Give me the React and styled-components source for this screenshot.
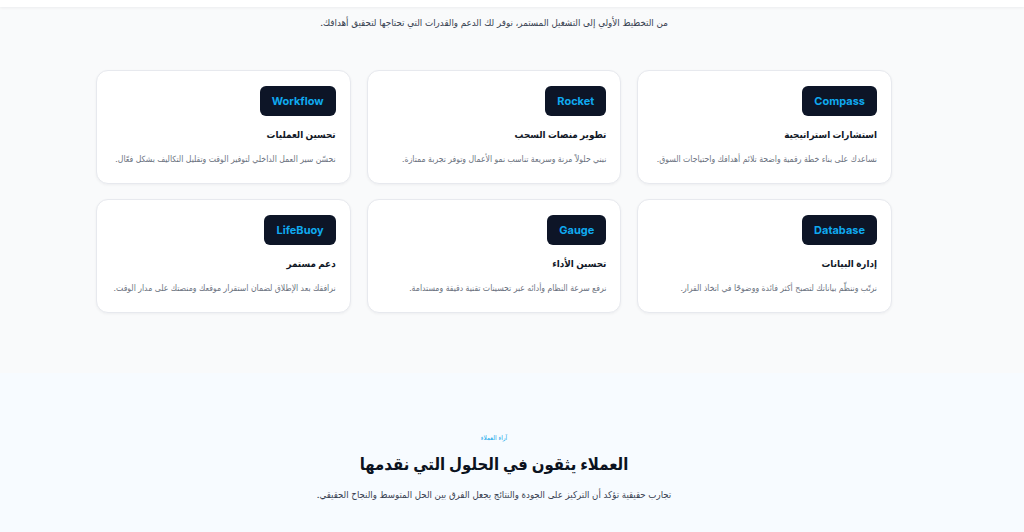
import React from 'react'
import styled, { createGlobalStyle } from 'styled-components'

const GlobalStyle = createGlobalStyle`
  * { box-sizing: border-box; }
  body {
    margin: 0;
    background: #f9fafb;
    font-family: "Inter", "DejaVu Sans", sans-serif;
    font-stretch: condensed;
    color: #111827;
  }
`

const TopBar = styled.header`
  height: 7px;
  background: #ffffff;
  box-shadow: 0 1px 3px rgba(15, 23, 42, 0.06);
  position: relative;
  z-index: 2;
`

const ServicesSection = styled.section`
  background: #f9fafb;
  padding: 8px 36px 60px 0;
`

const Inner = styled.div`
  width: 796px;
  margin: 0 auto;
`

const Lead = styled.p`
  margin: 0;
  text-align: center;
  font-size: 9.7px;
  line-height: 16px;
  color: #374151;
`

const CardGrid = styled.div`
  margin-top: 39px;
  display: grid;
  grid-template-columns: repeat(3, 1fr);
  column-gap: 16px;
  row-gap: 15px;
`

const Card = styled.article`
  background: #ffffff;
  border: 1px solid #e7e9ee;
  border-radius: 12px;
  box-shadow: 0 1px 3px rgba(15, 23, 42, 0.05);
  padding: 15px 14px 17px;
  display: flex;
  flex-direction: column;
  align-items: flex-start;
`

const Badge = styled.span`
  height: 30px;
  padding: 0 12px;
  border-radius: 6px;
  background: #0d1527;
  color: #0fa9f0;
  font-family: "Inter", sans-serif;
  font-stretch: normal;
  font-weight: 700;
  font-size: 11px;
  display: inline-flex;
  align-items: center;
`

const CardTitle = styled.h3`
  margin: 11px 0 0;
  font-size: 9.8px;
  line-height: 16px;
  font-weight: 700;
  color: #111827;
`

const CardText = styled.p`
  margin: 9px 0 0;
  font-size: 8.6px;
  line-height: 14px;
  color: #6b7280;
`

const ReviewsSection = styled.section`
  background: #f7fbff;
  padding: 60px 36px 30px 0;
  text-align: center;
`

const Eyebrow = styled.div`
  font-size: 6.5px;
  line-height: 10px;
  color: #0ea5e9;
`

const Heading = styled.h2`
  margin: 7px 0 0;
  font-size: 16.6px;
  line-height: 28px;
  font-weight: 700;
  color: #0b1220;
`

const SubHeading = styled.p`
  margin: 9px 0 0;
  font-size: 9.6px;
  line-height: 16px;
  color: #374151;
`

const services = [
  { badge: 'Compass', title: 'استشارات استراتيجية', text: 'نساعدك على بناء خطة رقمية واضحة تلائم أهدافك واحتياجات السوق.' },
  { badge: 'Rocket', title: 'تطوير منصات السحب', text: 'نبني حلولاً مرنة وسريعة تناسب نمو الأعمال وتوفر تجربة ممتازة.' },
  { badge: 'Workflow', title: 'تحسين العمليات', text: 'نحسّن سير العمل الداخلي لتوفير الوقت وتقليل التكاليف بشكل فعّال.' },
  { badge: 'Database', title: 'إدارة البيانات', text: 'نرتّب وننظّم بياناتك لتصبح أكثر فائدة ووضوحًا في اتخاذ القرار.' },
  { badge: 'Gauge', title: 'تحسين الأداء', text: 'نرفع سرعة النظام وأدائه عبر تحسينات تقنية دقيقة ومستدامة.' },
  { badge: 'LifeBuoy', title: 'دعم مستمر', text: 'نرافقك بعد الإطلاق لضمان استقرار موقعك ومنصتك على مدار الوقت.' },
]

export default function App() {
  return (
    <div dir="rtl">
      <GlobalStyle />
      <TopBar />
      <ServicesSection>
        <Inner>
          <Lead>من التخطيط الأولي إلى التشغيل المستمر، نوفر لك الدعم والقدرات التي تحتاجها لتحقيق أهدافك.</Lead>
          <CardGrid>
            {services.map(s => (
              <Card key={s.badge}>
                <Badge dir="ltr">{s.badge}</Badge>
                <CardTitle>{s.title}</CardTitle>
                <CardText>{s.text}</CardText>
              </Card>
            ))}
          </CardGrid>
        </Inner>
      </ServicesSection>
      <ReviewsSection>
        <Eyebrow>آراء العملاء</Eyebrow>
        <Heading>العملاء يثقون في الحلول التي نقدمها</Heading>
        <SubHeading>تجارب حقيقية تؤكد أن التركيز على الجودة والنتائج يجعل الفرق بين الحل المتوسط والنجاح الحقيقي.</SubHeading>
      </ReviewsSection>
    </div>
  )
}
